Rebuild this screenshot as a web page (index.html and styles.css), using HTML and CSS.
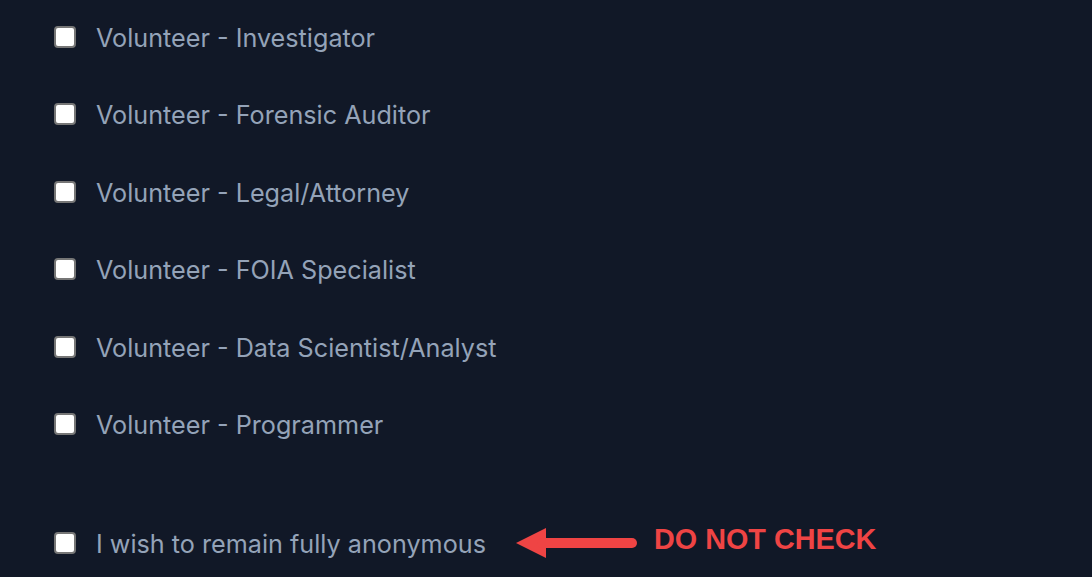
FILE: index.html
```html
<!DOCTYPE html>
<html lang="en">
<head>
<meta charset="utf-8">
<title>Volunteer options</title>
<link rel="stylesheet" href="styles.css">
</head>
<body>
<main class="form">
  <ul class="options">
    <li class="option"><label class="opt-label"><input type="checkbox" class="box"><span>Volunteer - Investigator</span></label></li>
    <li class="option"><label class="opt-label"><input type="checkbox" class="box"><span>Volunteer - Forensic Auditor</span></label></li>
    <li class="option"><label class="opt-label"><input type="checkbox" class="box"><span>Volunteer - Legal/Attorney</span></label></li>
    <li class="option"><label class="opt-label"><input type="checkbox" class="box"><span>Volunteer - FOIA Specialist</span></label></li>
    <li class="option"><label class="opt-label"><input type="checkbox" class="box"><span>Volunteer - Data Scientist/Analyst</span></label></li>
    <li class="option"><label class="opt-label"><input type="checkbox" class="box"><span>Volunteer - Programmer</span></label></li>
  </ul>
  <div class="anon-row">
    <label class="opt-label"><input type="checkbox" class="box"><span>I wish to remain fully anonymous</span></label>
    <svg class="arrow" width="122" height="32" viewBox="0 0 122 32" aria-hidden="true">
      <path d="M0 16 L30 1 L30 31 Z" fill="#ef4444"/>
      <line x1="26" y1="16" x2="116" y2="16" stroke="#ef4444" stroke-width="10" stroke-linecap="round"/>
    </svg>
    <span class="warn">DO NOT CHECK</span>
  </div>
</main>
</body>
</html>
```
FILE: styles.css
```css
html, body {
  margin: 0;
  padding: 0;
  background: #111827;
}
body {
  font-family: Inter, "Noto Sans", sans-serif;
  color: #94a3b8;
}
.form {
  padding: 22px 0 0 54px;
}
.options {
  list-style: none;
  margin: 0;
  padding: 0;
  display: flex;
  flex-direction: column;
  gap: 47.4px;
}
.option {
  height: 30px;
  display: flex;
  align-items: center;
}
.opt-label {
  display: flex;
  align-items: center;
  gap: 20px;
  font-size: 25.2px;
  line-height: 30px;
  height: 30px;
}
.opt-label span {
  position: relative;
  top: 1px;
}
.box {
  appearance: none;
  -webkit-appearance: none;
  margin: 0;
  width: 22px;
  height: 22px;
  box-sizing: border-box;
  background: #ffffff;
  border: 2px solid #767676;
  border-radius: 4px;
  flex: none;
}
.anon-row {
  margin-top: 89px;
  display: flex;
  align-items: center;
  height: 30px;
}
.arrow {
  margin-left: 30px;
  flex: none;
}
.warn {
  margin-left: 16px;
  font-family: "Liberation Sans", Arial, sans-serif;
  font-weight: 700;
  font-size: 28.8px;
  color: #ef4444;
  position: relative;
  top: -3px;
}
```
